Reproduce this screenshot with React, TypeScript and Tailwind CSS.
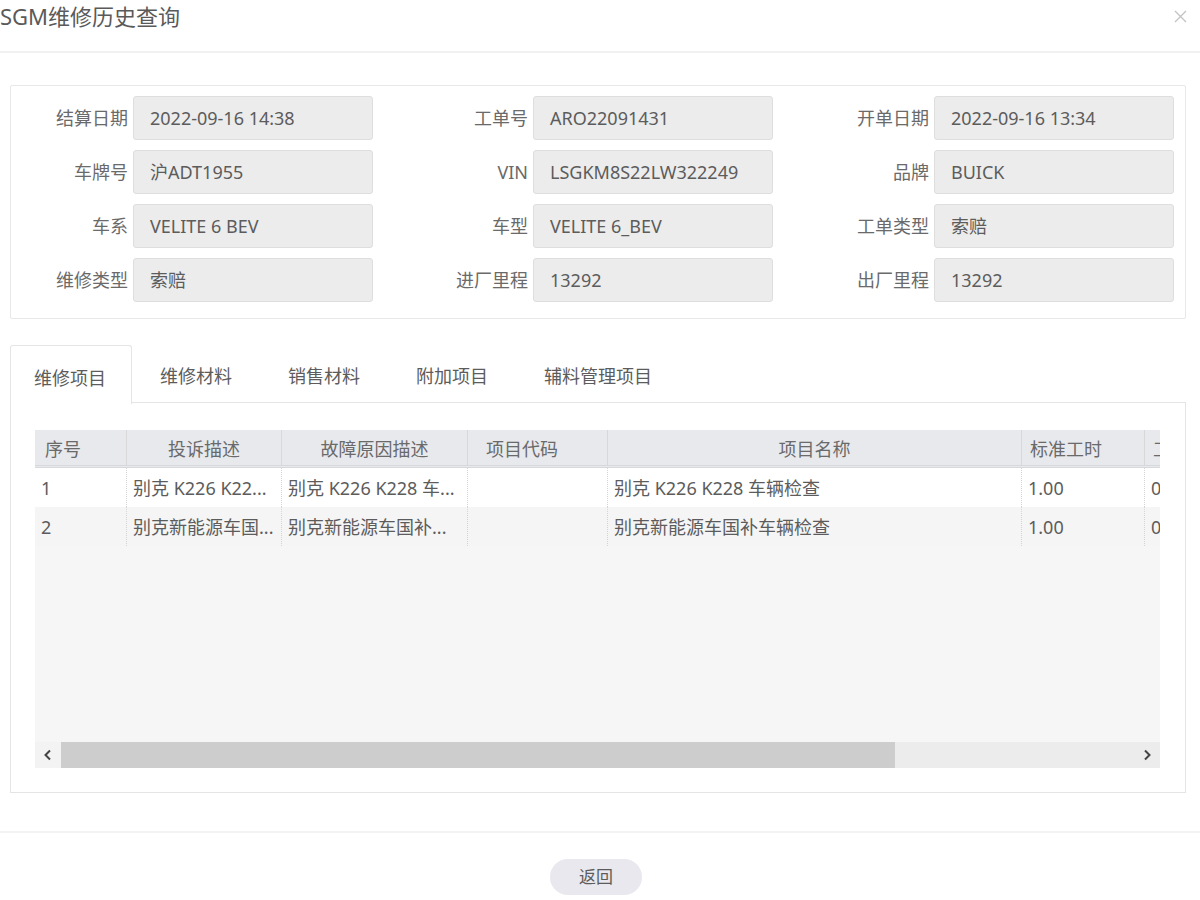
import React from "react";

const fields: [string, string][][] = [
  [
    ["结算日期", "2022-09-16 14:38"],
    ["工单号", "ARO22091431"],
    ["开单日期", "2022-09-16 13:34"],
  ],
  [
    ["车牌号", "沪ADT1955"],
    ["VIN", "LSGKM8S22LW322249"],
    ["品牌", "BUICK"],
  ],
  [
    ["车系", "VELITE 6 BEV"],
    ["车型", "VELITE 6_BEV"],
    ["工单类型", "索赔"],
  ],
  [
    ["维修类型", "索赔"],
    ["进厂里程", "13292"],
    ["出厂里程", "13292"],
  ],
];

const tabs = ["维修项目", "维修材料", "销售材料", "附加项目", "辅料管理项目"];

const columns = [
  { title: "序号", width: "w-[92px]", head: "justify-start pl-[10px]" },
  { title: "投诉描述", width: "w-[155px]", head: "justify-center" },
  { title: "故障原因描述", width: "w-[186px]", head: "justify-center" },
  { title: "项目代码", width: "w-[140px]", head: "justify-start pl-[18px]" },
  { title: "项目名称", width: "w-[414px]", head: "justify-center" },
  { title: "标准工时", width: "w-[123px]", head: "justify-start pl-[8px]" },
  { title: "工时单价", width: "w-[110px]", head: "justify-start pl-[8px]" },
];

const rows = [
  ["1", "别克 K226 K22...", "别克 K226 K228 车...", "", "别克 K226 K228 车辆检查", "1.00", "0.00"],
  ["2", "别克新能源车国...", "别克新能源车国补...", "", "别克新能源车国补车辆检查", "1.00", "0.00"],
];

export default function App() {
  return (
    <div className="w-[1200px] h-[900px] bg-white text-[#666] font-['Noto_Sans','Noto_Sans_CJK_SC',sans-serif] overflow-hidden">
      {/* Header */}
      <div className="h-[53px] flex items-start justify-between border-b-2 border-[#f1f1f1]">
        <span className="text-[22px] leading-[32px] text-[#5a5a5a]">SGM维修历史查询</span>
        <div className="h-[32px] flex items-center pr-[13px]">
          <svg width="13" height="13" viewBox="0 0 13 13">
            <path d="M1 1 L12 12 M12 1 L1 12" stroke="#c4c4c4" strokeWidth="1.4" fill="none" />
          </svg>
        </div>
      </div>

      {/* Info panel */}
      <div className="mt-[32px] ml-[10px] w-[1176px] border border-[#e8e8e8] rounded-[2px] pt-[10px] pb-[16px] flex flex-col gap-[10px]">
        {fields.map((row, i) => (
          <div key={i} className="grid grid-cols-[362px_400px_401px]">
            {row.map(([label, value]) => (
              <div key={label} className="flex items-center">
                <span className="flex-1 text-right pr-[5px] text-[18px] text-[#6a6a6a]">{label}</span>
                <div className="w-[240px] h-[44px] bg-[#ececec] border border-[#dedede] rounded-[3px] flex items-center pl-[16px] text-[18px] text-[#5c5c5c]">
                  {value}
                </div>
              </div>
            ))}
          </div>
        ))}
      </div>

      {/* Tabs */}
      <div className="mt-[26px] ml-[10px] w-[1176px]">
        <div className="flex h-[58px]">
          {tabs.map((t, i) =>
            i === 0 ? (
              <div
                key={t}
                className="h-[59px] pl-[23px] pr-[25px] flex items-center pt-[6px] border border-b-0 border-[#e5e5e5] rounded-t-[3px] bg-white text-[18px] text-[#5c5c5c] relative z-10"
              >
                {t}
              </div>
            ) : (
              <div
                key={t}
                className="h-[58px] px-[28px] flex items-center pt-[6px] border-b border-[#e5e5e5] text-[18px] text-[#5c5c5c]"
              >
                {t}
              </div>
            )
          )}
          <div className="flex-1 border-b border-[#e5e5e5]" />
        </div>

        {/* Tab content */}
        <div className="border border-t-0 border-[#e5e5e5] pt-[27px] pl-[24px] pr-[24px] pb-[24px]">
          <div className="w-[1125px] h-[338px] bg-[#f6f6f6] flex flex-col overflow-hidden">
            {/* Table header */}
            <div className="flex h-[38px] bg-[#e7e9ed] border-b-[3px] border-double border-[#d6d8dc] shrink-0">
              {columns.map((c) => (
                <div
                  key={c.title}
                  className={`${c.width} shrink-0 flex items-center pt-[3px] ${c.head} border-r border-[#d8d8d8] text-[18px] text-[#6a6a6a]`}
                >
                  {c.title}
                </div>
              ))}
            </div>
            {/* Rows */}
            {rows.map((r, ri) => (
              <div key={ri} className={`flex h-[39px] shrink-0 ${ri === 0 ? "bg-white" : "bg-[#f5f5f5]"}`}>
                {r.map((cell, ci) => (
                  <div
                    key={ci}
                    className={`${columns[ci].width} shrink-0 flex items-center pt-[2px] pl-[6px] border-r border-dotted border-[#d4d4d4] text-[18px] text-[#5c5c5c] whitespace-nowrap overflow-hidden`}
                  >
                    {cell}
                  </div>
                ))}
              </div>
            ))}
            <div className="flex-1" />
            {/* Scrollbar */}
            <div className="h-[26px] flex shrink-0 bg-[#ececec]">
              <div className="w-[26px] flex items-center justify-center bg-[#f3f3f3]">
                <svg width="10" height="12" viewBox="0 0 10 12">
                  <path d="M7 1.5 L2.5 6 L7 10.5" fill="none" stroke="#444" strokeWidth="2" />
                </svg>
              </div>
              <div className="w-[834px] bg-[#cdcdcd]" />
              <div className="flex-1" />
              <div className="w-[26px] flex items-center justify-center">
                <svg width="10" height="12" viewBox="0 0 10 12">
                  <path d="M3 1.5 L7.5 6 L3 10.5" fill="none" stroke="#444" strokeWidth="2" />
                </svg>
              </div>
            </div>
          </div>
        </div>
      </div>

      {/* Footer */}
      <div className="mt-[38px] border-t-2 border-[#f3f3f3] flex justify-center pt-[26px]">
        <button className="ml-[-8px] w-[92px] h-[36px] rounded-full bg-[#e8e8ee] text-[17px] text-[#5c5c5c] flex items-center justify-center">
          返回
        </button>
      </div>
    </div>
  );
}
